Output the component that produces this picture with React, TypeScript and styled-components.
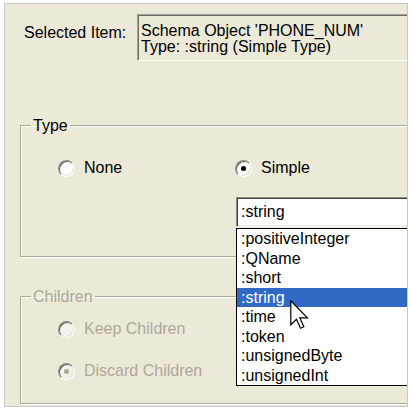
import React from "react";
import styled, { createGlobalStyle } from "styled-components";

const GlobalStyle = createGlobalStyle`
  html, body { margin: 0; padding: 0; background: #ffffff; }
  body { font-family: "Liberation Sans", Arial, sans-serif; font-size: 16px; color: #000; }
  * { box-sizing: border-box; }
`;

const Panel = styled.div`
  margin: 3px 0 0 4px;
  width: 404px;
  height: 404px;
  border: 1px solid #c9c9c9;
  background: #ece9d8;
  overflow: hidden;
  display: flex;
  flex-direction: column;
`;

const Header = styled.div`
  display: flex;
  align-items: flex-start;
  margin: 10px 0 0 19px;
`;

const HeaderLabel = styled.div`
  width: 113px;
  flex: none;
  padding-top: 10px;
  line-height: 18px;
  white-space: nowrap;
`;

const InfoBox = styled.div`
  flex: none;
  width: 300px;
  height: 47px;
  border: 1px solid;
  border-color: #a0a0a0 #ffffff #ffffff #a0a0a0;
  box-shadow: inset 1px 1px 0 #716f64;
  padding: 8px 0 0 3px;
  line-height: 16px;
  white-space: nowrap;
`;

const Group = styled.fieldset<{ $mt: number; $pb: number; $disabled?: boolean }>`
  margin: ${(p) => p.$mt}px 0 0 15px;
  padding: 0 0 ${(p) => p.$pb}px 0;
  width: 430px;
  flex: none;
  border: 1px solid #aca899;
  border-radius: 0;
  box-shadow: inset 1px 1px 0 #ffffff, 1px 1px 0 #ffffff;
  color: ${(p) => (p.$disabled ? "#aca899" : "#000")};
  min-width: 0;
`;

const Legend = styled.legend`
  margin-left: 10px;
  padding: 0 2px;
  line-height: 17px;
`;

const RadioRow = styled.div<{ $mt: number }>`
  display: grid;
  grid-template-columns: 177px auto;
  margin-top: ${(p) => p.$mt}px;
  padding-left: 37px;
  height: 18px;
`;

const RadioItem = styled.label`
  display: flex;
  align-items: center;
  gap: 9px;
  line-height: 18px;
  white-space: nowrap;
`;

const RadioCircle = styled.span<{ $checked?: boolean; $disabled?: boolean }>`
  position: relative;
  flex: none;
  width: 17px;
  height: 17px;
  border-radius: 50%;
  border: 1px solid;
  border-color: #8d8b82 #ffffff #ffffff #8d8b82;
  box-shadow: inset 1px 1px 0 #5e5d58, inset -1px -1px 0 #e3e0d4;
  background: ${(p) => (p.$disabled ? "#f3f2ec" : "#ffffff")};
  &::after {
    content: "";
    display: ${(p) => (p.$checked ? "block" : "none")};
    position: absolute;
    left: 5px;
    top: 5px;
    width: 5px;
    height: 5px;
    border-radius: 50%;
    background: ${(p) => (p.$disabled ? "#aca899" : "#000")};
  }
`;

const ComboWrap = styled.div`
  position: relative;
  margin: 20px 0 0 215px;
  width: 260px;
  height: 30px;
`;

const ComboField = styled.div`
  height: 30px;
  border: 1px solid;
  border-color: #8d8b82 #ffffff #ffffff #8d8b82;
  box-shadow: inset 1px 1px 0 #404040, inset -1px -1px 0 #ece9d8;
  background: #fff;
  padding: 0 0 0 4px;
  line-height: 28px;
`;

const DropList = styled.ul`
  position: absolute;
  left: 0;
  top: 31px;
  width: 260px;
  margin: 0;
  padding: 0;
  list-style: none;
  background: #fff;
  border: 1px solid #000;
  z-index: 2;
`;

const DropItem = styled.li<{ $active?: boolean }>`
  height: 19.5px;
  line-height: 19.5px;
  padding-left: 4px;
  white-space: nowrap;
  background: ${(p) => (p.$active ? "#316ac5" : "transparent")};
  color: ${(p) => (p.$active ? "#ffffff" : "#000")};
`;

const Cursor = styled.svg`
  position: absolute;
  left: 53px;
  top: 71px;
  z-index: 3;
`;

const items = [
  ":positiveInteger",
  ":QName",
  ":short",
  ":string",
  ":time",
  ":token",
  ":unsignedByte",
  ":unsignedInt",
];

export default function App() {
  return (
    <>
      <GlobalStyle />
      <Panel>
        <Header>
          <HeaderLabel>Selected Item:</HeaderLabel>
          <InfoBox>
            Schema Object 'PHONE_NUM'
            <br />
            Type: :string (Simple Type)
          </InfoBox>
        </Header>
        <Group $mt={56} $pb={29}>
          <Legend>Type</Legend>
          <RadioRow $mt={25}>
            <RadioItem>
              <RadioCircle />
              None
            </RadioItem>
            <RadioItem>
              <RadioCircle $checked />
              Simple
            </RadioItem>
          </RadioRow>
          <ComboWrap>
            <ComboField>:string</ComboField>
            <DropList>
              {items.map((it) => (
                <DropItem key={it} $active={it === ":string"}>
                  {it}
                </DropItem>
              ))}
              <Cursor width="19" height="30" viewBox="0 0 12.6 20">
                <path
                  d="M0.5 0.5 L0.5 16.5 L4.3 12.8 L7 18.8 L9.2 17.8 L6.5 11.9 L11.6 11.9 Z"
                  fill="#ffffff"
                  stroke="#000000"
                  strokeWidth="0.8"
                  strokeLinejoin="miter"
                />
              </Cursor>
            </DropList>
          </ComboWrap>
        </Group>
        <Group $mt={31} $pb={23} $disabled>
          <Legend>Children</Legend>
          <RadioRow $mt={15}>
            <RadioItem>
              <RadioCircle $disabled />
              Keep Children
            </RadioItem>
          </RadioRow>
          <RadioRow $mt={24}>
            <RadioItem>
              <RadioCircle $disabled $checked />
              Discard Children
            </RadioItem>
          </RadioRow>
        </Group>
      </Panel>
    </>
  );
}
